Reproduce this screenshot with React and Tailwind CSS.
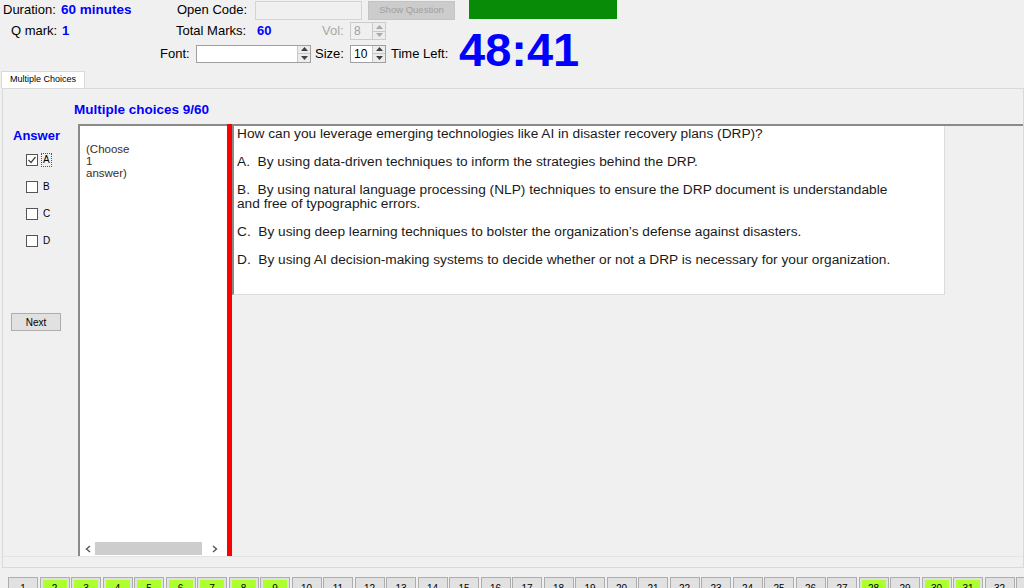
import React from "react";

const FONT = { fontFamily: '"Liberation Sans", Arial, sans-serif' };

const GREEN_NUMBERS = [2, 3, 4, 5, 6, 7, 8, 9, 28, 30, 31];

function Arrow({ up, disabled }) {
  return (
    <svg width="7" height="4" viewBox="0 0 7 4" aria-hidden="true">
      <path
        d={up ? "M0 4 L3.5 0 L7 4 Z" : "M0 0 L3.5 4 L7 0 Z"}
        fill={disabled ? "#a8a8a8" : "#404040"}
      />
    </svg>
  );
}

function Spinner({ value, width, disabled }) {
  return (
    <div
      className={`flex h-[18px] ${width} border ${
        disabled ? "border-[#cccccc] bg-[#f0f0f0]" : "border-[#a0a0a0] bg-white"
      }`}
    >
      <div
        className={`flex-1 pl-[3px] text-[12px] leading-[16px] ${
          disabled ? "text-[#a0a0a0]" : "text-black"
        }`}
      >
        {value}
      </div>
      <div className="flex w-[13px] flex-col border-l border-[#c8c8c8] bg-[#ececec]">
        <div className="flex flex-1 items-center justify-center border-b border-[#c8c8c8]">
          <Arrow up disabled={disabled} />
        </div>
        <div className="flex flex-1 items-center justify-center">
          <Arrow disabled={disabled} />
        </div>
      </div>
    </div>
  );
}

function Choice({ label, checked }) {
  return (
    <div className="flex h-[27px] items-center pl-[23px]">
      <div className="flex h-[12px] w-[12px] items-center justify-center border border-[#555555] bg-white">
        {checked && (
          <svg width="10" height="10" viewBox="0 0 10 10" aria-hidden="true">
            <path d="M1.5 5 L4 7.5 L8.5 2" stroke="#444444" strokeWidth="1.2" fill="none" />
          </svg>
        )}
      </div>
      <span
        className={`ml-[4px] px-[1px] text-[10px] leading-[12px] text-black ${
          checked ? "outline outline-1 outline-dotted outline-[#555555]" : ""
        }`}
      >
        {label}
      </span>
    </div>
  );
}

export default function App() {
  const numbers = Array.from({ length: 33 }, (_, i) => i + 1);

  return (
    <div
      className="h-[588px] w-[1024px] overflow-hidden bg-[#f0f0f0] text-[13px] text-black"
      style={FONT}
    >
      {/* header */}
      <div className="flex h-[70px]">
        <div className="flex w-[456px] shrink-0 flex-col">
          <div className="flex h-[20px] items-center">
            <span className="w-[61px] pl-[3px]">Duration:</span>
            <span className="w-[116px] text-[13.5px] font-bold text-[#0000ff]">60 minutes</span>
            <span className="w-[78px]">Open Code:</span>
            <div className="h-[19px] w-[107px] border border-[#d4d4d4] bg-[#f0f0f0]" />
            <div className="ml-[6px] flex h-[19px] w-[87px] items-center justify-center border border-[#c4c4c4] bg-[#cccccc] text-[9.5px] text-[#a0a0a0]">
              Show Question
            </div>
          </div>
          <div className="mt-[1px] flex h-[20px] items-center">
            <span className="w-[62px] pl-[11px]">Q mark:</span>
            <span className="w-[114px] font-bold text-[#0000ff]">1</span>
            <span className="w-[81px]">Total Marks:</span>
            <span className="w-[65px] font-bold text-[#0000ff]">60</span>
            <span className="w-[28px] text-[#a8a8a8]">Vol:</span>
            <Spinner value="8" width="w-[36px]" disabled />
          </div>
          <div className="mt-[3px] flex h-[19px] items-center">
            <span className="w-[196px] pl-[160px]">Font:</span>
            <Spinner value="" width="w-[115px]" />
            <span className="ml-[4px] w-[35px]">Size:</span>
            <Spinner value="10" width="w-[36px]" />
            <span className="ml-[5px]">Time Left:</span>
          </div>
        </div>
        <div className="ml-[13px] flex flex-col">
          <div className="h-[19px] w-[148px] shrink-0 bg-[#088c08]" />
          <div className="-ml-[10px] mt-[7px] shrink-0 text-[47px] font-bold leading-none text-[#0000ff]">
            48:41
          </div>
        </div>
      </div>

      {/* tab strip */}
      <div className="flex h-[18px] items-end pl-[1px]">
        <div className="flex h-[17px] w-[84px] items-center justify-center border border-b-0 border-[#d9d9d9] bg-white text-[9px]">
          Multiple Choices
        </div>
      </div>

      {/* tab panel */}
      <div className="ml-[2px] flex h-[480px] flex-col border border-[#d9d9d9]">
        <div className="h-[35px] pl-[71px] pt-[13px] text-[13.5px] font-bold leading-[16px] text-[#0000ff]">
          Multiple choices 9/60
        </div>

        <div className="flex h-[432px]">
          {/* answers column */}
          <div className="flex w-[75px] flex-col">
            <div className="pl-[10px] pt-[4px] text-[13px] font-bold leading-[16px] text-[#0000ff]">
              Answer
            </div>
            <div className="mt-[2px] flex flex-col">
              <Choice label="A" checked />
              <Choice label="B" />
              <Choice label="C" />
              <Choice label="D" />
            </div>
            <div className="ml-[8px] mt-[59px] flex h-[18px] w-[50px] items-center justify-center border border-[#adadad] bg-[#e1e1e1] text-[10px]">
              Next
            </div>
          </div>

          {/* instruction box */}
          <div className="flex w-[149px] flex-col border-l-2 border-t-2 border-[#8a8a8a] bg-white">
            <div className="flex-1 pl-[6px] pt-[17px] text-[11.5px] leading-[12px] text-[#3d2b1f]">
              (Choose
              <br />1
              <br />
              answer)
            </div>
            <div className="flex h-[15px] items-center">
              <div className="flex w-[15px] justify-center">
                <svg width="6" height="8" viewBox="0 0 6 8" aria-hidden="true">
                  <path d="M5 1 L1.5 4 L5 7" stroke="#555555" strokeWidth="1.4" fill="none" />
                </svg>
              </div>
              <div className="h-[13px] flex-1 bg-[#cdcdcd]" />
              <div className="flex w-[25px] justify-center">
                <svg width="6" height="8" viewBox="0 0 6 8" aria-hidden="true">
                  <path d="M1 1 L4.5 4 L1 7" stroke="#555555" strokeWidth="1.4" fill="none" />
                </svg>
              </div>
            </div>
          </div>

          <div className="w-[5px] bg-[#ff0000]" />

          {/* question area */}
          <div className="flex-1 border-t-2 border-[#8a8a8a]">
            <div className="h-[169px] w-[713px] border-b border-l-2 border-r border-b-[#dcdcdc] border-l-[#8a8a8a] border-r-[#dcdcdc] bg-white pl-[3px] pt-[1px] text-[13.7px] leading-[14px] text-[#1a1a1a]">
              <p className="mb-[14px] whitespace-nowrap">
                How can you leverage emerging technologies like AI in disaster recovery plans (DRP)?
              </p>
              <p className="mb-[14px] whitespace-nowrap">
                A.&nbsp; By using data-driven techniques to inform the strategies behind the DRP.
              </p>
              <p className="mb-[14px] whitespace-nowrap">
                B.&nbsp; By using natural language processing (NLP) techniques to ensure the DRP document is understandable
                <br />
                and free of typographic errors.
              </p>
              <p className="mb-[14px] whitespace-nowrap">
                C.&nbsp; By using deep learning techniques to bolster the organization’s defense against disasters.
              </p>
              <p className="whitespace-nowrap">
                D.&nbsp; By using AI decision-making systems to decide whether or not a DRP is necessary for your organization.
              </p>
            </div>
          </div>
        </div>

        <div className="flex-1 border-t border-[#e4e4e4]" />
      </div>

      {/* question navigator */}
      <div className="mt-[9px] flex gap-[1.5px] pl-[8px]">
        {numbers.map((n) => {
          const green = GREEN_NUMBERS.includes(n);
          return (
            <div
              key={n}
              className="h-[22px] w-[30px] shrink-0 border border-[#adadad] bg-[#e1e1e1] p-[2px]"
            >
              <div
                className={`flex h-full w-full items-center justify-center text-[10px] ${
                  green ? "bg-[#adff2f]" : ""
                }`}
              >
                {n}
              </div>
            </div>
          );
        })}
      </div>
    </div>
  );
}
